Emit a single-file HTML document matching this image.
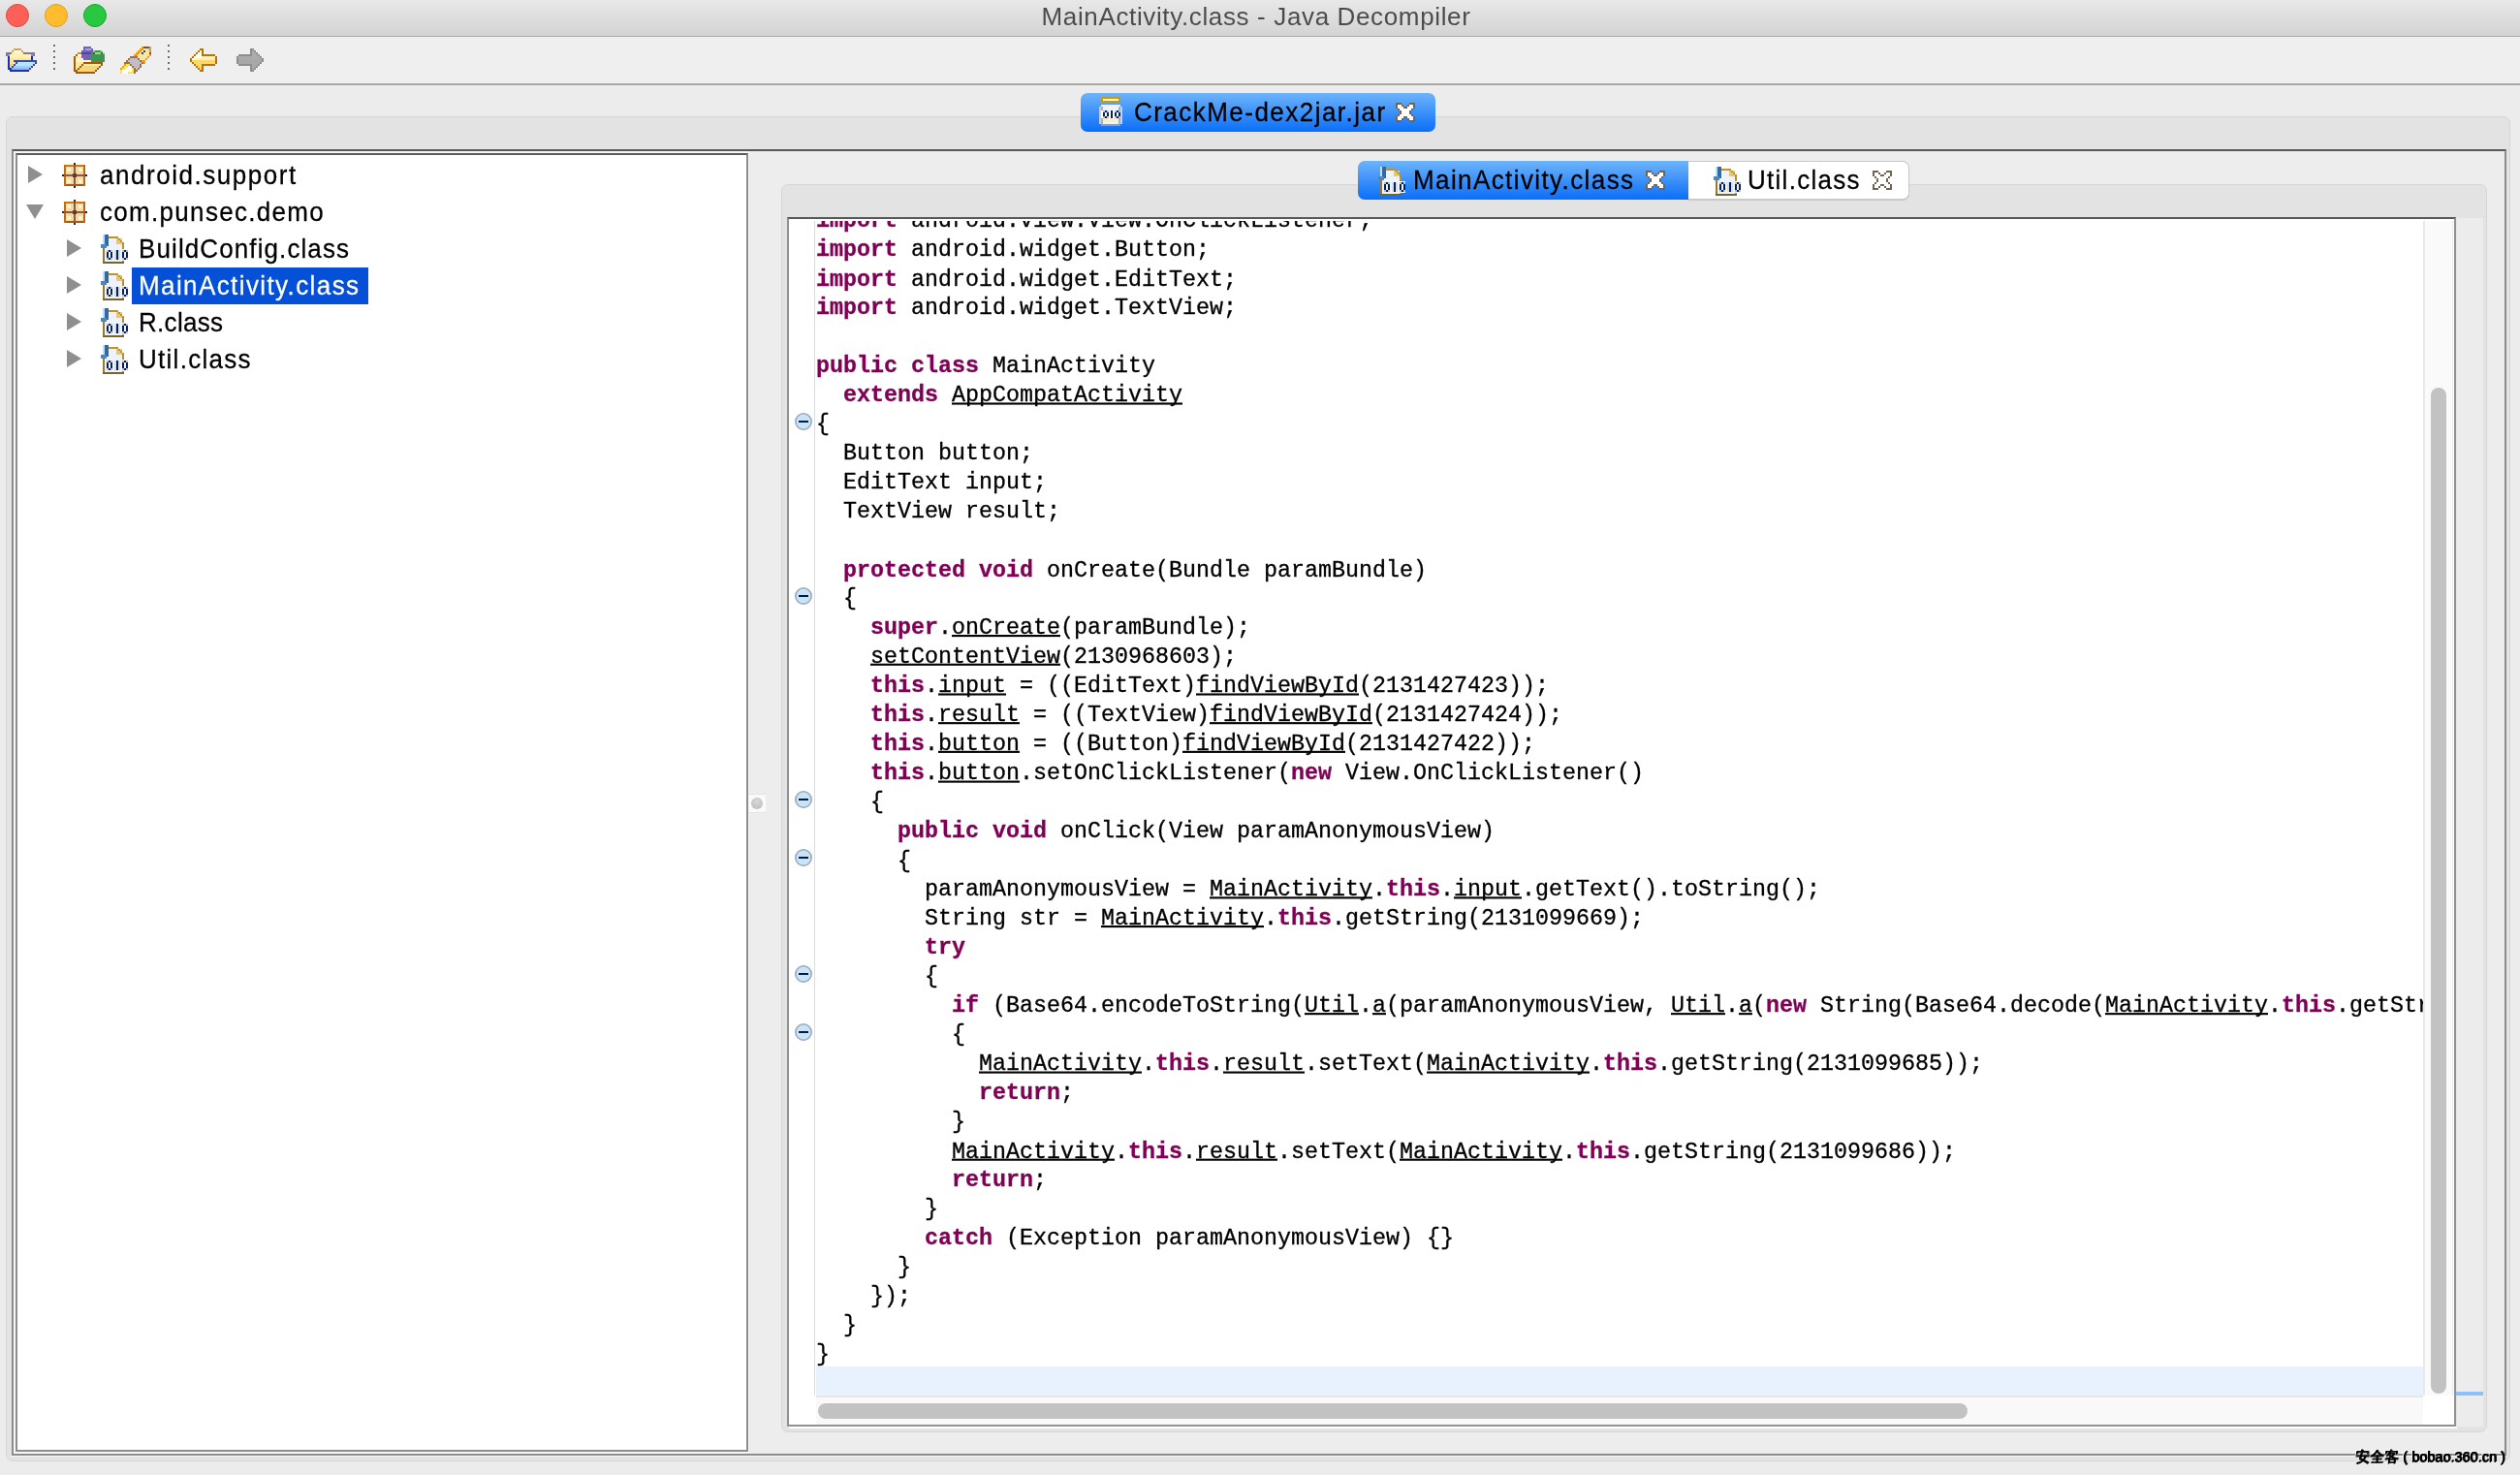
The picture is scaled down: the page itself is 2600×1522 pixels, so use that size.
<!DOCTYPE html>
<html><head><meta charset="utf-8">
<style>
*{box-sizing:border-box;margin:0;padding:0}
html,body{width:2600px;height:1522px;overflow:hidden;background:#ececec;font-family:"Liberation Sans",sans-serif;position:relative}
.a{will-change:transform}
.a{position:absolute}
#title{left:0;top:0;width:2600px;height:38px;background:linear-gradient(#e8e8e8,#d3d3d3);border-bottom:1px solid #acacac}
.tl{position:absolute;top:4px;width:24px;height:24px;border-radius:50%}
#ttext{left:-4px;top:0;width:2600px;text-align:center;font-size:26px;line-height:34px;color:#4c4c4c;letter-spacing:0.64px}
#toolbar{left:0;top:38px;width:2600px;height:50px;background:#efefef;border-bottom:2px solid #a8a8a8}
.sep{position:absolute;width:2px;height:26px;background:repeating-linear-gradient(#6e6e6e 0 2px,transparent 2px 6px)}
.tree{font-size:26px;color:#000;letter-spacing:1.1px;line-height:38px;white-space:pre;transform:scaleY(1.08);transform-origin:0 28px;-webkit-text-stroke:0.25px currentColor}
pre,.code{font-family:"Liberation Mono",monospace;font-size:23.33px;line-height:30px;white-space:pre;color:#000;-webkit-text-stroke:0.3px currentColor}
.k{color:#7f0055;font-weight:bold}
.u{text-decoration:underline;text-underline-offset:0.5px;text-decoration-thickness:2px;text-decoration-skip-ink:none}
.fold{position:absolute;left:820px;width:18px;height:18px}
</style></head><body>
<!-- title bar -->
<div id="title" class="a">
  <div class="tl" style="left:6px;background:#fe5f57;border:1px solid #e2463f"></div>
  <div class="tl" style="left:46px;background:#febc2e;border:1px solid #e1a116"></div>
  <div class="tl" style="left:86px;background:#28c840;border:1px solid #17a72b"></div>
  <div id="ttext" class="a">MainActivity.class - Java Decompiler</div>
</div>
<!-- toolbar -->
<div id="toolbar" class="a"></div>

<svg class="a" style="left:0px;top:0px" width="290" height="86" shape-rendering="crispEdges"><rect x="14" y="50" width="8" height="2" fill="#d1a45c"/><rect x="12" y="52" width="2" height="2" fill="#d1a45c"/><rect x="14" y="52" width="8" height="2" fill="#fffef6"/><rect x="22" y="52" width="2" height="2" fill="#d1a45c"/><rect x="6" y="54" width="6" height="2" fill="#8c7888"/><rect x="12" y="54" width="12" height="2" fill="#fff0b4"/><rect x="24" y="54" width="12" height="2" fill="#8c7888"/><rect x="6" y="56" width="2" height="2" fill="#8c7888"/><rect x="8" y="56" width="2" height="2" fill="#7a92da"/><rect x="10" y="56" width="22" height="2" fill="#fff0b4"/><rect x="32" y="56" width="2" height="2" fill="#7a92da"/><rect x="34" y="56" width="2" height="2" fill="#8c7888"/><rect x="8" y="58" width="2" height="2" fill="#1631b4"/><rect x="10" y="58" width="22" height="2" fill="#fff0b4"/><rect x="32" y="58" width="2" height="2" fill="#1631b4"/><rect x="8" y="60" width="2" height="2" fill="#1631b4"/><rect x="10" y="60" width="22" height="2" fill="#fde49a"/><rect x="32" y="60" width="2" height="2" fill="#1631b4"/><rect x="8" y="62" width="2" height="2" fill="#1631b4"/><rect x="10" y="62" width="4" height="2" fill="#fde49a"/><rect x="14" y="62" width="24" height="2" fill="#3d4a9c"/><rect x="8" y="64" width="2" height="2" fill="#1631b4"/><rect x="10" y="64" width="6" height="2" fill="#fde49a"/><rect x="16" y="64" width="2" height="2" fill="#3d4a9c"/><rect x="18" y="64" width="18" height="2" fill="#b2e6fd"/><rect x="36" y="64" width="2" height="2" fill="#3d4a9c"/><rect x="8" y="66" width="2" height="2" fill="#1631b4"/><rect x="10" y="66" width="4" height="2" fill="#fbd268"/><rect x="14" y="66" width="2" height="2" fill="#3d4a9c"/><rect x="16" y="66" width="18" height="2" fill="#b2e6fd"/><rect x="34" y="66" width="2" height="2" fill="#3d4a9c"/><rect x="8" y="68" width="2" height="2" fill="#1631b4"/><rect x="10" y="68" width="2" height="2" fill="#fbd268"/><rect x="12" y="68" width="2" height="2" fill="#3d4a9c"/><rect x="14" y="68" width="18" height="2" fill="#a0d0f6"/><rect x="32" y="68" width="2" height="2" fill="#3d4a9c"/><rect x="8" y="70" width="4" height="2" fill="#1631b4"/><rect x="12" y="70" width="18" height="2" fill="#94b8ee"/><rect x="30" y="70" width="2" height="2" fill="#3d4a9c"/><rect x="10" y="72" width="20" height="2" fill="#1631b4"/><rect x="86" y="48" width="8" height="2" fill="#7564b6"/><rect x="86" y="50" width="2" height="2" fill="#7564b6"/><rect x="88" y="50" width="6" height="2" fill="#aaa2d6"/><rect x="94" y="50" width="2" height="2" fill="#7564b6"/><rect x="84" y="52" width="12" height="2" fill="#7564b6"/><rect x="96" y="52" width="2" height="2" fill="#aaa2d6"/><rect x="98" y="52" width="6" height="2" fill="#3f9550"/><rect x="104" y="52" width="2" height="2" fill="#a8d48c"/><rect x="80" y="54" width="4" height="2" fill="#d4900e"/><rect x="84" y="54" width="10" height="2" fill="#54459e"/><rect x="94" y="54" width="2" height="2" fill="#7564b6"/><rect x="96" y="54" width="2" height="2" fill="#157a32"/><rect x="98" y="54" width="6" height="2" fill="#a8d48c"/><rect x="104" y="54" width="2" height="2" fill="#157a32"/><rect x="106" y="54" width="2" height="2" fill="#a8d48c"/><rect x="78" y="56" width="2" height="2" fill="#a35a0a"/><rect x="80" y="56" width="4" height="2" fill="#ffffff"/><rect x="84" y="56" width="10" height="2" fill="#7564b6"/><rect x="94" y="56" width="14" height="2" fill="#3f9550"/><rect x="76" y="58" width="2" height="2" fill="#a35a0a"/><rect x="78" y="58" width="6" height="2" fill="#fde8a4"/><rect x="84" y="58" width="10" height="2" fill="#7564b6"/><rect x="94" y="58" width="14" height="2" fill="#3f9550"/><rect x="76" y="60" width="2" height="2" fill="#a35a0a"/><rect x="78" y="60" width="8" height="2" fill="#fff6d0"/><rect x="86" y="60" width="8" height="2" fill="#7564b6"/><rect x="94" y="60" width="14" height="2" fill="#3f9550"/><rect x="76" y="62" width="2" height="2" fill="#a35a0a"/><rect x="78" y="62" width="16" height="2" fill="#fff6d0"/><rect x="94" y="62" width="14" height="2" fill="#3f9550"/><rect x="76" y="64" width="2" height="2" fill="#a35a0a"/><rect x="78" y="64" width="8" height="2" fill="#fde8a4"/><rect x="86" y="64" width="20" height="2" fill="#a35a0a"/><rect x="76" y="66" width="2" height="2" fill="#a35a0a"/><rect x="78" y="66" width="6" height="2" fill="#fde8a4"/><rect x="84" y="66" width="2" height="2" fill="#a35a0a"/><rect x="86" y="66" width="18" height="2" fill="#fde8a4"/><rect x="104" y="66" width="2" height="2" fill="#a35a0a"/><rect x="76" y="68" width="2" height="2" fill="#a35a0a"/><rect x="78" y="68" width="4" height="2" fill="#fde8a4"/><rect x="82" y="68" width="2" height="2" fill="#a35a0a"/><rect x="84" y="68" width="18" height="2" fill="#f9d57a"/><rect x="102" y="68" width="2" height="2" fill="#a35a0a"/><rect x="76" y="70" width="2" height="2" fill="#a35a0a"/><rect x="78" y="70" width="2" height="2" fill="#fde8a4"/><rect x="80" y="70" width="2" height="2" fill="#a35a0a"/><rect x="82" y="70" width="18" height="2" fill="#f9d57a"/><rect x="100" y="70" width="2" height="2" fill="#a35a0a"/><rect x="76" y="72" width="4" height="2" fill="#a35a0a"/><rect x="80" y="72" width="18" height="2" fill="#f9d57a"/><rect x="98" y="72" width="2" height="2" fill="#a35a0a"/><rect x="78" y="74" width="20" height="2" fill="#a35a0a"/><rect x="146" y="48" width="2" height="2" fill="#f29c12"/><rect x="148" y="48" width="6" height="2" fill="#7e5426"/><rect x="154" y="48" width="2" height="2" fill="#c9a05e"/><rect x="144" y="50" width="4" height="2" fill="#f29c12"/><rect x="148" y="50" width="4" height="2" fill="#fbe6a0"/><rect x="152" y="50" width="2" height="2" fill="#d2d4dc"/><rect x="154" y="50" width="2" height="2" fill="#c9a05e"/><rect x="142" y="52" width="4" height="2" fill="#f29c12"/><rect x="146" y="52" width="2" height="2" fill="#fbe6a0"/><rect x="148" y="52" width="2" height="2" fill="#1a4aa8"/><rect x="150" y="52" width="4" height="2" fill="#fbe6a0"/><rect x="154" y="52" width="2" height="2" fill="#c9a05e"/><rect x="140" y="54" width="4" height="2" fill="#f29c12"/><rect x="144" y="54" width="2" height="2" fill="#fbe6a0"/><rect x="146" y="54" width="2" height="2" fill="#1a4aa8"/><rect x="148" y="54" width="6" height="2" fill="#fbe6a0"/><rect x="154" y="54" width="2" height="2" fill="#7e5426"/><rect x="138" y="56" width="4" height="2" fill="#f29c12"/><rect x="142" y="56" width="12" height="2" fill="#fbe6a0"/><rect x="154" y="56" width="2" height="2" fill="#f29c12"/><rect x="134" y="58" width="8" height="2" fill="#9c7442"/><rect x="142" y="58" width="10" height="2" fill="#fbe6a0"/><rect x="152" y="58" width="2" height="2" fill="#f29c12"/><rect x="132" y="60" width="2" height="2" fill="#9c7442"/><rect x="134" y="60" width="8" height="2" fill="#c4bccc"/><rect x="142" y="60" width="2" height="2" fill="#9c7442"/><rect x="144" y="60" width="6" height="2" fill="#fbe6a0"/><rect x="150" y="60" width="2" height="2" fill="#f29c12"/><rect x="130" y="62" width="2" height="2" fill="#9c7442"/><rect x="132" y="62" width="12" height="2" fill="#c4bccc"/><rect x="144" y="62" width="2" height="2" fill="#9c7442"/><rect x="146" y="62" width="4" height="2" fill="#f29c12"/><rect x="128" y="64" width="6" height="2" fill="#9c7442"/><rect x="134" y="64" width="12" height="2" fill="#c4bccc"/><rect x="146" y="64" width="2" height="2" fill="#9c7442"/><rect x="148" y="64" width="2" height="2" fill="#f29c12"/><rect x="128" y="66" width="2" height="2" fill="#f29c12"/><rect x="130" y="66" width="4" height="2" fill="#f6e45c"/><rect x="134" y="66" width="2" height="2" fill="#9c7442"/><rect x="136" y="66" width="8" height="2" fill="#c4bccc"/><rect x="144" y="66" width="2" height="2" fill="#9c7442"/><rect x="126" y="68" width="2" height="2" fill="#f29c12"/><rect x="128" y="68" width="4" height="2" fill="#f6e45c"/><rect x="132" y="68" width="4" height="2" fill="#fffff4"/><rect x="136" y="68" width="2" height="2" fill="#9c7442"/><rect x="138" y="68" width="6" height="2" fill="#c4bccc"/><rect x="144" y="68" width="2" height="2" fill="#9c7442"/><rect x="124" y="70" width="2" height="2" fill="#f29c12"/><rect x="126" y="70" width="4" height="2" fill="#f6e45c"/><rect x="130" y="70" width="6" height="2" fill="#fffff4"/><rect x="136" y="70" width="2" height="2" fill="#f6e45c"/><rect x="138" y="70" width="2" height="2" fill="#9c7442"/><rect x="140" y="70" width="2" height="2" fill="#c4bccc"/><rect x="142" y="70" width="2" height="2" fill="#9c7442"/><rect x="124" y="72" width="2" height="2" fill="#f6e45c"/><rect x="126" y="72" width="10" height="2" fill="#fffff4"/><rect x="136" y="72" width="2" height="2" fill="#f6e45c"/><rect x="138" y="72" width="4" height="2" fill="#9c7442"/><rect x="124" y="74" width="2" height="2" fill="#f6e45c"/><rect x="126" y="74" width="6" height="2" fill="#fffff4"/><rect x="132" y="74" width="6" height="2" fill="#f6e45c"/><rect x="138" y="74" width="2" height="2" fill="#9c7442"/><rect x="206" y="50" width="4" height="2" fill="#b57500"/><rect x="204" y="52" width="2" height="2" fill="#b57500"/><rect x="206" y="52" width="2" height="2" fill="#fffef0"/><rect x="208" y="52" width="2" height="2" fill="#b57500"/><rect x="202" y="54" width="2" height="2" fill="#b57500"/><rect x="204" y="54" width="4" height="2" fill="#fffef0"/><rect x="208" y="54" width="2" height="2" fill="#b57500"/><rect x="200" y="56" width="2" height="2" fill="#b57500"/><rect x="202" y="56" width="6" height="2" fill="#fffef0"/><rect x="208" y="56" width="14" height="2" fill="#b57500"/><rect x="198" y="58" width="2" height="2" fill="#b57500"/><rect x="200" y="58" width="8" height="2" fill="#fffef0"/><rect x="208" y="58" width="14" height="2" fill="#fff2bc"/><rect x="222" y="58" width="2" height="2" fill="#b57500"/><rect x="196" y="60" width="2" height="2" fill="#b57500"/><rect x="198" y="60" width="2" height="2" fill="#fffef0"/><rect x="200" y="60" width="22" height="2" fill="#fff2bc"/><rect x="222" y="60" width="2" height="2" fill="#b57500"/><rect x="196" y="62" width="2" height="2" fill="#b57500"/><rect x="198" y="62" width="24" height="2" fill="#fbd868"/><rect x="222" y="62" width="2" height="2" fill="#b57500"/><rect x="198" y="64" width="2" height="2" fill="#b57500"/><rect x="200" y="64" width="22" height="2" fill="#fbd868"/><rect x="222" y="64" width="2" height="2" fill="#b57500"/><rect x="200" y="66" width="2" height="2" fill="#b57500"/><rect x="202" y="66" width="6" height="2" fill="#fbd868"/><rect x="208" y="66" width="14" height="2" fill="#b57500"/><rect x="202" y="68" width="2" height="2" fill="#b57500"/><rect x="204" y="68" width="4" height="2" fill="#fbd868"/><rect x="208" y="68" width="2" height="2" fill="#b57500"/><rect x="204" y="70" width="2" height="2" fill="#b57500"/><rect x="206" y="70" width="2" height="2" fill="#fbd868"/><rect x="208" y="70" width="2" height="2" fill="#b57500"/><rect x="206" y="72" width="4" height="2" fill="#b57500"/><rect x="258" y="50" width="4" height="2" fill="#8e8e8e"/><rect x="258" y="52" width="2" height="2" fill="#8e8e8e"/><rect x="260" y="52" width="2" height="2" fill="#acacac"/><rect x="262" y="52" width="2" height="2" fill="#8e8e8e"/><rect x="258" y="54" width="2" height="2" fill="#8e8e8e"/><rect x="260" y="54" width="4" height="2" fill="#acacac"/><rect x="264" y="54" width="2" height="2" fill="#8e8e8e"/><rect x="246" y="56" width="14" height="2" fill="#8e8e8e"/><rect x="260" y="56" width="6" height="2" fill="#acacac"/><rect x="266" y="56" width="2" height="2" fill="#8e8e8e"/><rect x="244" y="58" width="2" height="2" fill="#8e8e8e"/><rect x="246" y="58" width="14" height="2" fill="#aaaaaa"/><rect x="260" y="58" width="8" height="2" fill="#acacac"/><rect x="268" y="58" width="2" height="2" fill="#8e8e8e"/><rect x="244" y="60" width="2" height="2" fill="#8e8e8e"/><rect x="246" y="60" width="22" height="2" fill="#aaaaaa"/><rect x="268" y="60" width="2" height="2" fill="#acacac"/><rect x="270" y="60" width="2" height="2" fill="#8e8e8e"/><rect x="244" y="62" width="2" height="2" fill="#8e8e8e"/><rect x="246" y="62" width="24" height="2" fill="#a8a8a8"/><rect x="270" y="62" width="2" height="2" fill="#8e8e8e"/><rect x="244" y="64" width="2" height="2" fill="#8e8e8e"/><rect x="246" y="64" width="22" height="2" fill="#a8a8a8"/><rect x="268" y="64" width="2" height="2" fill="#8e8e8e"/><rect x="246" y="66" width="14" height="2" fill="#8e8e8e"/><rect x="260" y="66" width="6" height="2" fill="#a8a8a8"/><rect x="266" y="66" width="2" height="2" fill="#8e8e8e"/><rect x="258" y="68" width="2" height="2" fill="#8e8e8e"/><rect x="260" y="68" width="4" height="2" fill="#a8a8a8"/><rect x="264" y="68" width="2" height="2" fill="#8e8e8e"/><rect x="258" y="70" width="2" height="2" fill="#8e8e8e"/><rect x="260" y="70" width="2" height="2" fill="#a8a8a8"/><rect x="262" y="70" width="2" height="2" fill="#8e8e8e"/><rect x="258" y="72" width="4" height="2" fill="#8e8e8e"/></svg>
<div class="sep" style="left:55px;top:46px"></div>
<div class="sep" style="left:173px;top:46px"></div>

<!-- outer tab pane -->
<div class="a" style="left:6px;top:120px;width:2584px;height:1388px;background:#e3e3e3;border:1px solid #d6d6d6;border-radius:7px"></div>
<!-- content border -->
<div class="a" style="left:12px;top:154px;width:2574px;height:1348px;background:#ededed;border:2px solid #8c8c8c;border-top-color:#575757"></div>
<div class="a" style="left:14px;top:156px;width:759px;height:1344px;background:#f7f7f7"></div>
<div class="a" style="left:12px;top:1502px;width:2574px;height:1px;background:#fbfbfb"></div>
<!-- tree panel -->
<div class="a" style="left:16px;top:158px;width:756px;height:1340px;background:#fff;border:2px solid #8e8e8e;border-top-color:#5c5c5c"></div>




<!-- tree -->
<svg class="a" style="left:29px;top:171px" width="15" height="18" viewBox="0 0 15 18"><path d="M0 0L15 9L0 18Z" fill="#8f8f8f"/></svg>
<svg class="a" style="left:27px;top:211px" width="18" height="15" viewBox="0 0 18 15"><path d="M0 0H18L9 15Z" fill="#8f8f8f"/></svg>
<svg class="a" style="left:69px;top:247px" width="15" height="18" viewBox="0 0 15 18"><path d="M0 0L15 9L0 18Z" fill="#8f8f8f"/></svg>
<svg class="a" style="left:69px;top:285px" width="15" height="18" viewBox="0 0 15 18"><path d="M0 0L15 9L0 18Z" fill="#8f8f8f"/></svg>
<svg class="a" style="left:69px;top:323px" width="15" height="18" viewBox="0 0 15 18"><path d="M0 0L15 9L0 18Z" fill="#8f8f8f"/></svg>
<svg class="a" style="left:69px;top:361px" width="15" height="18" viewBox="0 0 15 18"><path d="M0 0L15 9L0 18Z" fill="#8f8f8f"/></svg>
<svg class="a" style="left:64px;top:168px" width="26" height="26" viewBox="0 0 26 26" shape-rendering="crispEdges"><rect x="2" y="2" width="22" height="22" fill="#f1d9a9"/>
<rect x="5" y="5" width="4" height="4" fill="#fbf0c4"/><rect x="17" y="5" width="4" height="4" fill="#fbf0c4"/>
<rect x="5" y="17" width="4" height="4" fill="#fbf0c4"/><rect x="17" y="17" width="4" height="4" fill="#fbf0c4"/>
<rect x="7" y="6" width="2" height="2" fill="#fffcd8"/><rect x="18" y="6" width="2" height="2" fill="#fffcd8"/>
<rect x="7" y="18" width="2" height="2" fill="#fffcd8"/><rect x="18" y="18" width="2" height="2" fill="#fffcd8"/>
<rect x="2" y="2" width="22" height="2" fill="#c97a12"/><rect x="2" y="22" width="22" height="2" fill="#a95b0c"/>
<rect x="2" y="2" width="2" height="22" fill="#bf6f10"/><rect x="22" y="2" width="2" height="22" fill="#b86a10"/>
<rect x="12" y="0" width="2" height="26" fill="#8c5a3c"/><rect x="0" y="12" width="26" height="2" fill="#8c5a3c"/>
<rect x="12" y="0" width="2" height="2" fill="#4a1e00"/><rect x="12" y="24" width="2" height="2" fill="#4a1e00"/>
<rect x="0" y="12" width="2" height="2" fill="#4a1e00"/><rect x="24" y="12" width="2" height="2" fill="#4a1e00"/>
<rect x="11" y="11" width="4" height="4" fill="#6a3a20"/></svg>
<svg class="a" style="left:64px;top:206px" width="26" height="26" viewBox="0 0 26 26" shape-rendering="crispEdges"><rect x="2" y="2" width="22" height="22" fill="#f1d9a9"/>
<rect x="5" y="5" width="4" height="4" fill="#fbf0c4"/><rect x="17" y="5" width="4" height="4" fill="#fbf0c4"/>
<rect x="5" y="17" width="4" height="4" fill="#fbf0c4"/><rect x="17" y="17" width="4" height="4" fill="#fbf0c4"/>
<rect x="7" y="6" width="2" height="2" fill="#fffcd8"/><rect x="18" y="6" width="2" height="2" fill="#fffcd8"/>
<rect x="7" y="18" width="2" height="2" fill="#fffcd8"/><rect x="18" y="18" width="2" height="2" fill="#fffcd8"/>
<rect x="2" y="2" width="22" height="2" fill="#c97a12"/><rect x="2" y="22" width="22" height="2" fill="#a95b0c"/>
<rect x="2" y="2" width="2" height="22" fill="#bf6f10"/><rect x="22" y="2" width="2" height="22" fill="#b86a10"/>
<rect x="12" y="0" width="2" height="26" fill="#8c5a3c"/><rect x="0" y="12" width="26" height="2" fill="#8c5a3c"/>
<rect x="12" y="0" width="2" height="2" fill="#4a1e00"/><rect x="12" y="24" width="2" height="2" fill="#4a1e00"/>
<rect x="0" y="12" width="2" height="2" fill="#4a1e00"/><rect x="24" y="12" width="2" height="2" fill="#4a1e00"/>
<rect x="11" y="11" width="4" height="4" fill="#6a3a20"/></svg>
<svg class="a" style="left:100px;top:240px" width="32" height="32" viewBox="0 0 32 32" shape-rendering="crispEdges"><rect x="8" y="6" width="18" height="24" fill="#eef3fb"/>
<rect x="20" y="6" width="6" height="6" fill="#e6c779"/>
<rect x="12" y="4" width="10" height="2" fill="#c29324"/>
<rect x="22" y="6" width="2" height="2" fill="#c29324"/><rect x="24" y="8" width="2" height="2" fill="#c29324"/>
<rect x="26" y="10" width="2" height="22" fill="#b8902c"/>
<rect x="6" y="16" width="2" height="16" fill="#9a7a28"/>
<rect x="6" y="30" width="22" height="2" fill="#76642c"/>
<rect x="6" y="2" width="2" height="12" fill="#c9dcef"/>
<rect x="8" y="2" width="4" height="12" fill="#2c6aa8"/>
<rect x="4" y="12" width="6" height="4" fill="#4b86bf"/>
<rect x="26" y="17" width="6" height="12" fill="#f4f6fb"/>
<rect x="12" y="18" width="2" height="2" fill="#062152"/><rect x="12" y="26" width="2" height="2" fill="#062152"/><rect x="10" y="20" width="2" height="6" fill="#062152"/><rect x="14" y="20" width="2" height="6" fill="#062152"/><rect x="10" y="18" width="2" height="2" fill="#b4bfd8"/><rect x="14" y="18" width="2" height="2" fill="#b4bfd8"/><rect x="10" y="26" width="2" height="2" fill="#b4bfd8"/><rect x="14" y="26" width="2" height="2" fill="#b4bfd8"/><rect x="18" y="18" width="2" height="10" fill="#d6deee"/><rect x="22" y="18" width="2" height="10" fill="#d6deee"/><rect x="20" y="18" width="2" height="10" fill="#062152"/><rect x="28" y="18" width="2" height="2" fill="#062152"/><rect x="28" y="26" width="2" height="2" fill="#062152"/><rect x="26" y="20" width="2" height="6" fill="#062152"/><rect x="30" y="20" width="2" height="6" fill="#062152"/><rect x="26" y="18" width="2" height="2" fill="#b4bfd8"/><rect x="30" y="18" width="2" height="2" fill="#b4bfd8"/><rect x="26" y="26" width="2" height="2" fill="#b4bfd8"/><rect x="30" y="26" width="2" height="2" fill="#b4bfd8"/></svg>
<svg class="a" style="left:100px;top:278px" width="32" height="32" viewBox="0 0 32 32" shape-rendering="crispEdges"><rect x="8" y="6" width="18" height="24" fill="#eef3fb"/>
<rect x="20" y="6" width="6" height="6" fill="#e6c779"/>
<rect x="12" y="4" width="10" height="2" fill="#c29324"/>
<rect x="22" y="6" width="2" height="2" fill="#c29324"/><rect x="24" y="8" width="2" height="2" fill="#c29324"/>
<rect x="26" y="10" width="2" height="22" fill="#b8902c"/>
<rect x="6" y="16" width="2" height="16" fill="#9a7a28"/>
<rect x="6" y="30" width="22" height="2" fill="#76642c"/>
<rect x="6" y="2" width="2" height="12" fill="#c9dcef"/>
<rect x="8" y="2" width="4" height="12" fill="#2c6aa8"/>
<rect x="4" y="12" width="6" height="4" fill="#4b86bf"/>
<rect x="26" y="17" width="6" height="12" fill="#f4f6fb"/>
<rect x="12" y="18" width="2" height="2" fill="#062152"/><rect x="12" y="26" width="2" height="2" fill="#062152"/><rect x="10" y="20" width="2" height="6" fill="#062152"/><rect x="14" y="20" width="2" height="6" fill="#062152"/><rect x="10" y="18" width="2" height="2" fill="#b4bfd8"/><rect x="14" y="18" width="2" height="2" fill="#b4bfd8"/><rect x="10" y="26" width="2" height="2" fill="#b4bfd8"/><rect x="14" y="26" width="2" height="2" fill="#b4bfd8"/><rect x="18" y="18" width="2" height="10" fill="#d6deee"/><rect x="22" y="18" width="2" height="10" fill="#d6deee"/><rect x="20" y="18" width="2" height="10" fill="#062152"/><rect x="28" y="18" width="2" height="2" fill="#062152"/><rect x="28" y="26" width="2" height="2" fill="#062152"/><rect x="26" y="20" width="2" height="6" fill="#062152"/><rect x="30" y="20" width="2" height="6" fill="#062152"/><rect x="26" y="18" width="2" height="2" fill="#b4bfd8"/><rect x="30" y="18" width="2" height="2" fill="#b4bfd8"/><rect x="26" y="26" width="2" height="2" fill="#b4bfd8"/><rect x="30" y="26" width="2" height="2" fill="#b4bfd8"/></svg>
<svg class="a" style="left:100px;top:316px" width="32" height="32" viewBox="0 0 32 32" shape-rendering="crispEdges"><rect x="8" y="6" width="18" height="24" fill="#eef3fb"/>
<rect x="20" y="6" width="6" height="6" fill="#e6c779"/>
<rect x="12" y="4" width="10" height="2" fill="#c29324"/>
<rect x="22" y="6" width="2" height="2" fill="#c29324"/><rect x="24" y="8" width="2" height="2" fill="#c29324"/>
<rect x="26" y="10" width="2" height="22" fill="#b8902c"/>
<rect x="6" y="16" width="2" height="16" fill="#9a7a28"/>
<rect x="6" y="30" width="22" height="2" fill="#76642c"/>
<rect x="6" y="2" width="2" height="12" fill="#c9dcef"/>
<rect x="8" y="2" width="4" height="12" fill="#2c6aa8"/>
<rect x="4" y="12" width="6" height="4" fill="#4b86bf"/>
<rect x="26" y="17" width="6" height="12" fill="#f4f6fb"/>
<rect x="12" y="18" width="2" height="2" fill="#062152"/><rect x="12" y="26" width="2" height="2" fill="#062152"/><rect x="10" y="20" width="2" height="6" fill="#062152"/><rect x="14" y="20" width="2" height="6" fill="#062152"/><rect x="10" y="18" width="2" height="2" fill="#b4bfd8"/><rect x="14" y="18" width="2" height="2" fill="#b4bfd8"/><rect x="10" y="26" width="2" height="2" fill="#b4bfd8"/><rect x="14" y="26" width="2" height="2" fill="#b4bfd8"/><rect x="18" y="18" width="2" height="10" fill="#d6deee"/><rect x="22" y="18" width="2" height="10" fill="#d6deee"/><rect x="20" y="18" width="2" height="10" fill="#062152"/><rect x="28" y="18" width="2" height="2" fill="#062152"/><rect x="28" y="26" width="2" height="2" fill="#062152"/><rect x="26" y="20" width="2" height="6" fill="#062152"/><rect x="30" y="20" width="2" height="6" fill="#062152"/><rect x="26" y="18" width="2" height="2" fill="#b4bfd8"/><rect x="30" y="18" width="2" height="2" fill="#b4bfd8"/><rect x="26" y="26" width="2" height="2" fill="#b4bfd8"/><rect x="30" y="26" width="2" height="2" fill="#b4bfd8"/></svg>
<svg class="a" style="left:100px;top:354px" width="32" height="32" viewBox="0 0 32 32" shape-rendering="crispEdges"><rect x="8" y="6" width="18" height="24" fill="#eef3fb"/>
<rect x="20" y="6" width="6" height="6" fill="#e6c779"/>
<rect x="12" y="4" width="10" height="2" fill="#c29324"/>
<rect x="22" y="6" width="2" height="2" fill="#c29324"/><rect x="24" y="8" width="2" height="2" fill="#c29324"/>
<rect x="26" y="10" width="2" height="22" fill="#b8902c"/>
<rect x="6" y="16" width="2" height="16" fill="#9a7a28"/>
<rect x="6" y="30" width="22" height="2" fill="#76642c"/>
<rect x="6" y="2" width="2" height="12" fill="#c9dcef"/>
<rect x="8" y="2" width="4" height="12" fill="#2c6aa8"/>
<rect x="4" y="12" width="6" height="4" fill="#4b86bf"/>
<rect x="26" y="17" width="6" height="12" fill="#f4f6fb"/>
<rect x="12" y="18" width="2" height="2" fill="#062152"/><rect x="12" y="26" width="2" height="2" fill="#062152"/><rect x="10" y="20" width="2" height="6" fill="#062152"/><rect x="14" y="20" width="2" height="6" fill="#062152"/><rect x="10" y="18" width="2" height="2" fill="#b4bfd8"/><rect x="14" y="18" width="2" height="2" fill="#b4bfd8"/><rect x="10" y="26" width="2" height="2" fill="#b4bfd8"/><rect x="14" y="26" width="2" height="2" fill="#b4bfd8"/><rect x="18" y="18" width="2" height="10" fill="#d6deee"/><rect x="22" y="18" width="2" height="10" fill="#d6deee"/><rect x="20" y="18" width="2" height="10" fill="#062152"/><rect x="28" y="18" width="2" height="2" fill="#062152"/><rect x="28" y="26" width="2" height="2" fill="#062152"/><rect x="26" y="20" width="2" height="6" fill="#062152"/><rect x="30" y="20" width="2" height="6" fill="#062152"/><rect x="26" y="18" width="2" height="2" fill="#b4bfd8"/><rect x="30" y="18" width="2" height="2" fill="#b4bfd8"/><rect x="26" y="26" width="2" height="2" fill="#b4bfd8"/><rect x="30" y="26" width="2" height="2" fill="#b4bfd8"/></svg>
<div class="a" style="left:136px;top:276px;width:244px;height:38px;background:#0650d8"></div>
<div class="a tree" style="left:103px;top:162px;letter-spacing:1.53px">android.support</div>
<div class="a tree" style="left:103px;top:200px;letter-spacing:1.31px">com.punsec.demo</div>
<div class="a tree" style="left:143px;top:238px">BuildConfig.class</div>
<div class="a tree" style="left:143px;top:276px;color:#fff;letter-spacing:1.4px">MainActivity.class</div>
<div class="a tree" style="left:143px;top:314px;letter-spacing:0.3px">R.class</div>
<div class="a tree" style="left:143px;top:352px;letter-spacing:1.28px">Util.class</div>

<!-- jar tab -->
<div class="a" style="left:1115px;top:96px;width:366px;height:40px;border-radius:7px;background:linear-gradient(#6db4fb,#0b6ef8);"></div>
<div class="a tree" style="left:1170px;top:96px;line-height:40px;letter-spacing:1.47px">CrackMe-dex2jar.jar</div>

<!-- inner tab pane -->
<div class="a" style="left:806px;top:190px;width:1760px;height:1288px;background:#e3e3e3;border:1px solid #d6d6d6;border-radius:7px"></div>
<div class="a" style="left:2535px;top:225px;width:27px;height:1247px;background:#ececec"></div>
<div class="a" style="left:2533px;top:1436px;width:29px;height:4px;background:#8fc0f9"></div>


<svg class="a" style="left:1134px;top:100px" width="24" height="30" viewBox="0 0 24 30" shape-rendering="crispEdges"><rect x="2" y="8" width="20" height="20" fill="#eef3fb"/>
<rect x="0" y="10" width="4" height="18" fill="#c4d0e2"/><rect x="20" y="10" width="4" height="18" fill="#c4d0e2"/>
<rect x="2" y="10" width="2" height="18" fill="#9fb2cc"/><rect x="20" y="10" width="2" height="18" fill="#9fb2cc"/>
<rect x="4" y="22" width="16" height="4" fill="#f6f0c8"/>
<rect x="2" y="28" width="20" height="2" fill="#8a9cba"/>
<rect x="2" y="0" width="20" height="6" fill="#c79a12"/>
<rect x="4" y="2" width="16" height="2" fill="#fff6cc"/>
<rect x="2" y="14" width="20" height="8" fill="#ffffff"/><rect x="6" y="14" width="2" height="2" fill="#062152"/><rect x="6" y="20" width="2" height="2" fill="#062152"/><rect x="4" y="16" width="2" height="4" fill="#062152"/><rect x="8" y="16" width="2" height="4" fill="#062152"/><rect x="4" y="14" width="2" height="2" fill="#b4bfd8"/><rect x="8" y="14" width="2" height="2" fill="#b4bfd8"/><rect x="4" y="20" width="2" height="2" fill="#b4bfd8"/><rect x="8" y="20" width="2" height="2" fill="#b4bfd8"/><rect x="12" y="14" width="2" height="8" fill="#062152"/><rect x="18" y="14" width="2" height="2" fill="#062152"/><rect x="18" y="20" width="2" height="2" fill="#062152"/><rect x="16" y="16" width="2" height="4" fill="#062152"/><rect x="20" y="16" width="2" height="4" fill="#062152"/><rect x="16" y="14" width="2" height="2" fill="#b4bfd8"/><rect x="20" y="14" width="2" height="2" fill="#b4bfd8"/><rect x="16" y="20" width="2" height="2" fill="#b4bfd8"/><rect x="20" y="20" width="2" height="2" fill="#b4bfd8"/></svg>
<svg class="a" style="left:1440px;top:106px" width="20" height="20" viewBox="0 0 10 10" shape-rendering="crispEdges"><path d="M1 1h2v1h1v1h2v-1h1v-1h2v2h-1v1h-1v2h1v1h1v2h-2v-1h-1v-1h-2v1h-1v1h-2v-2h1v-1h1v-2h-1v-1h-1z" fill="#fff"/>
<g fill="#6f6552">
<rect x="0" y="0" width="3" height="1"/><rect x="7" y="0" width="3" height="1"/>
<rect x="0" y="1" width="1" height="2"/><rect x="9" y="1" width="1" height="2"/>
<rect x="3" y="1" width="1" height="1"/><rect x="6" y="1" width="1" height="1"/>
<rect x="4" y="2" width="2" height="1"/>
<rect x="1" y="3" width="1" height="1"/><rect x="8" y="3" width="1" height="1"/>
<rect x="2" y="4" width="1" height="2"/><rect x="7" y="4" width="1" height="2"/>
<rect x="1" y="6" width="1" height="1"/><rect x="8" y="6" width="1" height="1"/>
<rect x="4" y="7" width="2" height="1"/>
<rect x="0" y="7" width="1" height="2"/><rect x="9" y="7" width="1" height="2"/>
<rect x="3" y="8" width="1" height="1"/><rect x="6" y="8" width="1" height="1"/>
<rect x="0" y="9" width="3" height="1"/><rect x="7" y="9" width="3" height="1"/>
</g></svg>
<!-- inner tabs -->
<div class="a" style="left:1742px;top:166px;width:228px;height:40px;background:#fff;border:1px solid #c9c9c9;border-left:none;border-radius:0 7px 7px 0;box-shadow:0 1px 1px rgba(0,0,0,0.12)"></div>
<div class="a" style="left:1401px;top:166px;width:341px;height:40px;border-radius:7px 0 0 7px;background:linear-gradient(#6db4fb,#0b6ef8)"></div>
<svg class="a" style="left:1418px;top:170px" width="32" height="32" viewBox="0 0 32 32" shape-rendering="crispEdges"><rect x="8" y="6" width="18" height="24" fill="#eef3fb"/>
<rect x="20" y="6" width="6" height="6" fill="#e6c779"/>
<rect x="12" y="4" width="10" height="2" fill="#c29324"/>
<rect x="22" y="6" width="2" height="2" fill="#c29324"/><rect x="24" y="8" width="2" height="2" fill="#c29324"/>
<rect x="26" y="10" width="2" height="22" fill="#b8902c"/>
<rect x="6" y="16" width="2" height="16" fill="#9a7a28"/>
<rect x="6" y="30" width="22" height="2" fill="#76642c"/>
<rect x="6" y="2" width="2" height="12" fill="#c9dcef"/>
<rect x="8" y="2" width="4" height="12" fill="#2c6aa8"/>
<rect x="4" y="12" width="6" height="4" fill="#4b86bf"/>
<rect x="26" y="17" width="6" height="12" fill="#f4f6fb"/>
<rect x="12" y="18" width="2" height="2" fill="#062152"/><rect x="12" y="26" width="2" height="2" fill="#062152"/><rect x="10" y="20" width="2" height="6" fill="#062152"/><rect x="14" y="20" width="2" height="6" fill="#062152"/><rect x="10" y="18" width="2" height="2" fill="#b4bfd8"/><rect x="14" y="18" width="2" height="2" fill="#b4bfd8"/><rect x="10" y="26" width="2" height="2" fill="#b4bfd8"/><rect x="14" y="26" width="2" height="2" fill="#b4bfd8"/><rect x="18" y="18" width="2" height="10" fill="#d6deee"/><rect x="22" y="18" width="2" height="10" fill="#d6deee"/><rect x="20" y="18" width="2" height="10" fill="#062152"/><rect x="28" y="18" width="2" height="2" fill="#062152"/><rect x="28" y="26" width="2" height="2" fill="#062152"/><rect x="26" y="20" width="2" height="6" fill="#062152"/><rect x="30" y="20" width="2" height="6" fill="#062152"/><rect x="26" y="18" width="2" height="2" fill="#b4bfd8"/><rect x="30" y="18" width="2" height="2" fill="#b4bfd8"/><rect x="26" y="26" width="2" height="2" fill="#b4bfd8"/><rect x="30" y="26" width="2" height="2" fill="#b4bfd8"/></svg>
<div class="a tree" style="left:1458px;top:166px;line-height:40px;letter-spacing:1.4px">MainActivity.class</div>
<svg class="a" style="left:1698px;top:176px" width="20" height="20" viewBox="0 0 10 10" shape-rendering="crispEdges"><path d="M1 1h2v1h1v1h2v-1h1v-1h2v2h-1v1h-1v2h1v1h1v2h-2v-1h-1v-1h-2v1h-1v1h-2v-2h1v-1h1v-2h-1v-1h-1z" fill="#fff"/>
<g fill="#6f6552">
<rect x="0" y="0" width="3" height="1"/><rect x="7" y="0" width="3" height="1"/>
<rect x="0" y="1" width="1" height="2"/><rect x="9" y="1" width="1" height="2"/>
<rect x="3" y="1" width="1" height="1"/><rect x="6" y="1" width="1" height="1"/>
<rect x="4" y="2" width="2" height="1"/>
<rect x="1" y="3" width="1" height="1"/><rect x="8" y="3" width="1" height="1"/>
<rect x="2" y="4" width="1" height="2"/><rect x="7" y="4" width="1" height="2"/>
<rect x="1" y="6" width="1" height="1"/><rect x="8" y="6" width="1" height="1"/>
<rect x="4" y="7" width="2" height="1"/>
<rect x="0" y="7" width="1" height="2"/><rect x="9" y="7" width="1" height="2"/>
<rect x="3" y="8" width="1" height="1"/><rect x="6" y="8" width="1" height="1"/>
<rect x="0" y="9" width="3" height="1"/><rect x="7" y="9" width="3" height="1"/>
</g></svg>
<svg class="a" style="left:1764px;top:170px" width="32" height="32" viewBox="0 0 32 32" shape-rendering="crispEdges"><rect x="8" y="6" width="18" height="24" fill="#eef3fb"/>
<rect x="20" y="6" width="6" height="6" fill="#e6c779"/>
<rect x="12" y="4" width="10" height="2" fill="#c29324"/>
<rect x="22" y="6" width="2" height="2" fill="#c29324"/><rect x="24" y="8" width="2" height="2" fill="#c29324"/>
<rect x="26" y="10" width="2" height="22" fill="#b8902c"/>
<rect x="6" y="16" width="2" height="16" fill="#9a7a28"/>
<rect x="6" y="30" width="22" height="2" fill="#76642c"/>
<rect x="6" y="2" width="2" height="12" fill="#c9dcef"/>
<rect x="8" y="2" width="4" height="12" fill="#2c6aa8"/>
<rect x="4" y="12" width="6" height="4" fill="#4b86bf"/>
<rect x="26" y="17" width="6" height="12" fill="#f4f6fb"/>
<rect x="12" y="18" width="2" height="2" fill="#062152"/><rect x="12" y="26" width="2" height="2" fill="#062152"/><rect x="10" y="20" width="2" height="6" fill="#062152"/><rect x="14" y="20" width="2" height="6" fill="#062152"/><rect x="10" y="18" width="2" height="2" fill="#b4bfd8"/><rect x="14" y="18" width="2" height="2" fill="#b4bfd8"/><rect x="10" y="26" width="2" height="2" fill="#b4bfd8"/><rect x="14" y="26" width="2" height="2" fill="#b4bfd8"/><rect x="18" y="18" width="2" height="10" fill="#d6deee"/><rect x="22" y="18" width="2" height="10" fill="#d6deee"/><rect x="20" y="18" width="2" height="10" fill="#062152"/><rect x="28" y="18" width="2" height="2" fill="#062152"/><rect x="28" y="26" width="2" height="2" fill="#062152"/><rect x="26" y="20" width="2" height="6" fill="#062152"/><rect x="30" y="20" width="2" height="6" fill="#062152"/><rect x="26" y="18" width="2" height="2" fill="#b4bfd8"/><rect x="30" y="18" width="2" height="2" fill="#b4bfd8"/><rect x="26" y="26" width="2" height="2" fill="#b4bfd8"/><rect x="30" y="26" width="2" height="2" fill="#b4bfd8"/></svg>
<div class="a tree" style="left:1803px;top:166px;line-height:40px;letter-spacing:1.28px">Util.class</div>
<svg class="a" style="left:1932px;top:176px" width="20" height="20" viewBox="0 0 10 10" shape-rendering="crispEdges"><g fill="#6f6552">
<rect x="0" y="0" width="3" height="1"/><rect x="7" y="0" width="3" height="1"/>
<rect x="0" y="1" width="1" height="2"/><rect x="9" y="1" width="1" height="2"/>
<rect x="3" y="1" width="1" height="1"/><rect x="6" y="1" width="1" height="1"/>
<rect x="4" y="2" width="2" height="1"/>
<rect x="1" y="3" width="1" height="1"/><rect x="8" y="3" width="1" height="1"/>
<rect x="2" y="4" width="1" height="2"/><rect x="7" y="4" width="1" height="2"/>
<rect x="1" y="6" width="1" height="1"/><rect x="8" y="6" width="1" height="1"/>
<rect x="4" y="7" width="2" height="1"/>
<rect x="0" y="7" width="1" height="2"/><rect x="9" y="7" width="1" height="2"/>
<rect x="3" y="8" width="1" height="1"/><rect x="6" y="8" width="1" height="1"/>
<rect x="0" y="9" width="3" height="1"/><rect x="7" y="9" width="3" height="1"/>
</g></svg>

<!-- editor -->
<div class="a" style="left:812px;top:224px;width:1722px;height:1248px;background:#fff;border:2px solid #919191;border-top-color:#585858;border-bottom-width:2px"></div>
<div class="a" style="left:814px;top:1472px;width:1721px;height:2px;background:#fff"></div>
<div class="a" style="left:840px;top:228px;width:1px;height:1212px;background:#dcdcdc"></div>
<div class="a" style="left:842px;top:1410px;width:1658px;height:30px;background:#e8f2fe"></div>
<!-- code -->
<div class="a" style="left:842px;top:228px;width:1658px;height:1182px;overflow:hidden">
<pre id="code" class="a" style="left:0px;top:-14.577px;line-height:28.3019px;transform:scaleY(1.06);transform-origin:0 0"><b class="k">import</b> android.view.View.OnClickListener;
<b class="k">import</b> android.widget.Button;
<b class="k">import</b> android.widget.EditText;
<b class="k">import</b> android.widget.TextView;

<b class="k">public</b> <b class="k">class</b> MainActivity
  <b class="k">extends</b> <span class="u">AppCompatActivity</span>
{
  Button button;
  EditText input;
  TextView result;

  <b class="k">protected</b> <b class="k">void</b> onCreate(Bundle paramBundle)
  {
    <b class="k">super</b>.<span class="u">onCreate</span>(paramBundle);
    <span class="u">setContentView</span>(2130968603);
    <b class="k">this</b>.<span class="u">input</span> = ((EditText)<span class="u">findViewById</span>(2131427423));
    <b class="k">this</b>.<span class="u">result</span> = ((TextView)<span class="u">findViewById</span>(2131427424));
    <b class="k">this</b>.<span class="u">button</span> = ((Button)<span class="u">findViewById</span>(2131427422));
    <b class="k">this</b>.<span class="u">button</span>.setOnClickListener(<b class="k">new</b> View.OnClickListener()
    {
      <b class="k">public</b> <b class="k">void</b> onClick(View paramAnonymousView)
      {
        paramAnonymousView = <span class="u">MainActivity</span>.<b class="k">this</b>.<span class="u">input</span>.getText().toString();
        String str = <span class="u">MainActivity</span>.<b class="k">this</b>.getString(2131099669);
        <b class="k">try</b>
        {
          <b class="k">if</b> (Base64.encodeToString(<span class="u">Util</span>.<span class="u">a</span>(paramAnonymousView, <span class="u">Util</span>.<span class="u">a</span>(<b class="k">new</b> String(Base64.decode(<span class="u">MainActivity</span>.<b class="k">this</b>.getString(2131099670), 0)))), 0).equals(str))
          {
            <span class="u">MainActivity</span>.<b class="k">this</b>.<span class="u">result</span>.setText(<span class="u">MainActivity</span>.<b class="k">this</b>.getString(2131099685));
            <b class="k">return</b>;
          }
          <span class="u">MainActivity</span>.<b class="k">this</b>.<span class="u">result</span>.setText(<span class="u">MainActivity</span>.<b class="k">this</b>.getString(2131099686));
          <b class="k">return</b>;
        }
        <b class="k">catch</b> (Exception paramAnonymousView) {}
      }
    });
  }
}</pre>
</div>
<svg class="a" style="left:820px;top:426px" width="18" height="18" viewBox="0 0 18 18"><circle cx="9" cy="9" r="8.2" fill="#c6e6f8" stroke="#9aa8c2" stroke-width="1.6"/>
<rect x="4" y="8" width="10" height="2" fill="#10163a"/></svg>
<svg class="a" style="left:820px;top:606px" width="18" height="18" viewBox="0 0 18 18"><circle cx="9" cy="9" r="8.2" fill="#c6e6f8" stroke="#9aa8c2" stroke-width="1.6"/>
<rect x="4" y="8" width="10" height="2" fill="#10163a"/></svg>
<svg class="a" style="left:820px;top:816px" width="18" height="18" viewBox="0 0 18 18"><circle cx="9" cy="9" r="8.2" fill="#c6e6f8" stroke="#9aa8c2" stroke-width="1.6"/>
<rect x="4" y="8" width="10" height="2" fill="#10163a"/></svg>
<svg class="a" style="left:820px;top:876px" width="18" height="18" viewBox="0 0 18 18"><circle cx="9" cy="9" r="8.2" fill="#c6e6f8" stroke="#9aa8c2" stroke-width="1.6"/>
<rect x="4" y="8" width="10" height="2" fill="#10163a"/></svg>
<svg class="a" style="left:820px;top:996px" width="18" height="18" viewBox="0 0 18 18"><circle cx="9" cy="9" r="8.2" fill="#c6e6f8" stroke="#9aa8c2" stroke-width="1.6"/>
<rect x="4" y="8" width="10" height="2" fill="#10163a"/></svg>
<svg class="a" style="left:820px;top:1056px" width="18" height="18" viewBox="0 0 18 18"><circle cx="9" cy="9" r="8.2" fill="#c6e6f8" stroke="#9aa8c2" stroke-width="1.6"/>
<rect x="4" y="8" width="10" height="2" fill="#10163a"/></svg>
<!-- scrollbars -->
<div class="a" style="left:2500px;top:228px;width:31px;height:1212px;background:#fafafa;border-left:2px solid #e9e9e9;border-right:1px solid #e9e9e9"></div>
<div class="a" style="left:2508px;top:400px;width:16px;height:1038px;background:#c2c2c2;border-radius:8px"></div>
<div class="a" style="left:842px;top:1440px;width:1658px;height:30px;background:#f9f9f9;border-top:2px solid #e6e6e6"></div>
<div class="a" style="left:844px;top:1448px;width:1186px;height:16px;background:#c2c2c2;border-radius:8px"></div>

<!-- split handle -->
<div class="a" style="left:772px;top:819px;width:18px;height:20px;background:#fafafa;border-top:1px solid #e4e4e4;border-bottom:1px solid #e4e4e4"></div>
<div class="a" style="left:775px;top:823px;width:12px;height:12px;border-radius:50%;background:radial-gradient(circle at 50% 35%,#d8d8d8,#b8b8b8)"></div>

<!-- watermark -->
<div class="a" style="left:2430px;top:1494px;font-size:14.5px;color:#000;white-space:nowrap;text-shadow:1px 0 0 #000,0 1px 0 #000,-1px -1px 0 rgba(255,255,255,0.8)">安全客 ( bobao.360.cn )</div>
</body></html>
